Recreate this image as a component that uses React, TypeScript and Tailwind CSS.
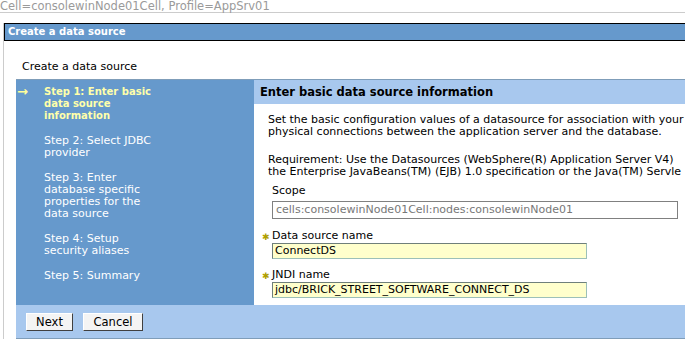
import React from "react";

const steps = [
  { lines: ["Step 1: Enter basic", "data source", "information"], current: true },
  { lines: ["Step 2: Select JDBC", "provider"] },
  { lines: ["Step 3: Enter", "database specific", "properties for the", "data source"] },
  { lines: ["Step 4: Setup", "security aliases"] },
  { lines: ["Step 5: Summary"] },
];

function StepList() {
  return (
    <div className="flex flex-col gap-[13px] pt-[6px]">
      {steps.map((step, i) => (
        <div key={i} className="flex">
          <div className="w-[28px] shrink-0 pl-[1px] text-[#ffff99] text-[13px] font-bold leading-[12px]">
            {step.current ? "→" : ""}
          </div>
          <div
            className={
              step.current
                ? "font-bold text-[10px] text-[#ffffaa] leading-[12px] whitespace-nowrap"
                : "text-white leading-[12px] whitespace-nowrap"
            }
          >
            {step.lines.map((l, j) => (
              <div key={j}>{l}</div>
            ))}
          </div>
        </div>
      ))}
    </div>
  );
}

const Required = ({ label }: { label: string }) => (
  <div className="flex items-end h-[12px] leading-[12px] -ml-[10px]">
    <span className="w-[10px] text-[9px] text-[#b0a000] leading-[10px]">✱</span>
    <span>{label}</span>
  </div>
);

function App() {
  return (
    <div className="w-[685px] h-[341px] overflow-hidden bg-white text-black font-['DejaVu_Sans',sans-serif] text-[11px]">
      <div className="h-[12px] leading-[12px] text-[11.5px] text-[#9a9a9a] whitespace-nowrap">
        Cell=consolewinNode01Cell, Profile=AppSrv01
      </div>
      <div className="h-px bg-[#cccccc]" />
      <div className="h-[10px]" />
      <div className="ml-[3px] border-l border-[#cccccc]">
        <div className="h-[18px] border border-r-0 border-black bg-[#6699cc] text-white font-bold text-[10px] leading-[16px] pl-[3px] whitespace-nowrap">
          Create a data source
        </div>
        <div className="pl-[12px]">
          <div className="h-[38px] pt-[20px] pl-[6px] leading-[12px]">Create a data source</div>
          <div className="border-t border-b border-[#7f9db9]">
            <div className="flex h-[225px]">
              <div className="w-[238px] shrink-0 bg-[#6699cc]">
                <StepList />
              </div>
              <div className="flex-1 min-w-0 overflow-hidden">
                <div className="h-[24px] bg-[#a8c8ee] font-bold text-[11.5px] leading-[24px] pl-[6px] whitespace-nowrap">
                  Enter basic data source information
                </div>
                <div className="pl-[14px] pt-[10px] leading-[12px] whitespace-nowrap">
                  <p>
                    Set the basic configuration values of a datasource for association with your
                    <br />
                    physical connections between the application server and the database.
                  </p>
                  <p className="mt-[16px]">
                    Requirement: Use the Datasources (WebSphere(R) Application Server V4)
                    <br />
                    the Enterprise JavaBeans(TM) (EJB) 1.0 specification or the Java(TM) Servle
                  </p>
                  <div className="pl-[4px] mt-[7px]">
                    <div className="leading-[12px]">Scope</div>
                    <div className="mt-[4px] w-[406px] h-[18px] border border-[#808080] text-[#777] leading-[16px] pl-[3px]">
                      cells:consolewinNode01Cell:nodes:consolewinNode01
                    </div>
                    <div className="mt-[11px]">
                      <Required label="Data source name" />
                      <div className="mt-[1px] w-[315px] h-[16px] bg-[#ffffcc] border border-[#9cc0b8] border-l-[#6f7f7a] border-t-[#6f7f7a] leading-[14px] pl-[2px]">
                        ConnectDS
                      </div>
                    </div>
                    <div className="mt-[10px]">
                      <Required label="JNDI name" />
                      <div className="mt-[1px] w-[315px] h-[16px] bg-[#ffffcc] border border-[#9cc0b8] border-l-[#6f7f7a] border-t-[#6f7f7a] leading-[14px] pl-[2px]">
                        jdbc/BRICK_STREET_SOFTWARE_CONNECT_DS
                      </div>
                    </div>
                  </div>
                </div>
              </div>
            </div>
            <div className="h-[33px] bg-[#a8c8ee] flex gap-[10px] pl-[10px] pt-[8px]">
              <button className="w-[47px] h-[18px] bg-[#f4f4f4] border border-white border-r-[#404040] border-b-[#404040] text-[11.5px] leading-[16px]">
                Next
              </button>
              <button className="w-[60px] h-[18px] bg-[#f4f4f4] border border-white border-r-[#404040] border-b-[#404040] text-[11.5px] leading-[16px]">
                Cancel
              </button>
            </div>
          </div>
        </div>
      </div>
    </div>
  );
}

export default App;
